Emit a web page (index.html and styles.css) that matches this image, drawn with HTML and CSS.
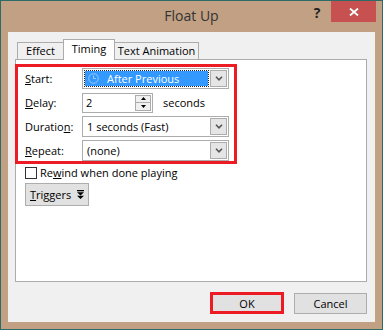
FILE: index.html
```html
<!DOCTYPE html>
<html lang="en">
<head>
    <meta charset="utf-8"/>
    <title>Float Up</title>
    <link rel="stylesheet" href="styles.css">
</head>
<body>
<div class="window">
    <div class="titlebar">
        <span class="title">Float Up</span>
        <div class="controls">
            <span class="help">?</span>
            <span class="close">
                <svg width="10" height="8" viewBox="0 0 10 8">
                    <path d="M1 0.5 L9 7.5 M9 0.5 L1 7.5" stroke="#fff" stroke-width="1.8" fill="none"/>
                </svg>
            </span>
        </div>
    </div>

    <div class="client">
        <div class="tabs">
            <span class="tab tab-effect">Effect</span>
            <span class="tab tab-timing active">Timing</span>
            <span class="tab tab-text">Text Animation</span>
        </div>

        <div class="tab-panel">
            <div class="highlight">
                <div class="row">
                    <span class="label"><u>S</u>tart:</span>
                    <div class="combo">
                        <div class="value selected">
                            <svg class="clock" width="11" height="11" viewBox="0 0 11 11">
                                <circle cx="5.5" cy="5.5" r="4.8" stroke="#9cc9ff" stroke-width="1" fill="none"/>
                                <path d="M5.5 2.5 V5.5 H8" stroke="#9cc9ff" stroke-width="1" fill="none"/>
                            </svg>
                            After Previous
                        </div>
                        <span class="drop">
                            <svg width="8" height="5" viewBox="0 0 8 5"><path d="M1 0.8 L4 3.8 L7 0.8" stroke="#555" stroke-width="1.6" fill="none"/></svg>
                        </span>
                    </div>
                </div>
                <div class="row">
                    <span class="label"><u>D</u>elay:</span>
                    <div class="spin-input">
                        <span class="spin-value">2</span>
                        <span class="spin">
                            <span class="spin-btn">
                                <svg width="5" height="3" viewBox="0 0 5 3"><path d="M0 3 L2.5 0 L5 3 Z" fill="#000"/></svg>
                            </span>
                            <span class="spin-btn">
                                <svg width="5" height="3" viewBox="0 0 5 3"><path d="M0 0 L5 0 L2.5 3 Z" fill="#000"/></svg>
                            </span>
                        </span>
                    </div>
                    <span class="unit">seconds</span>
                </div>
                <div class="row">
                    <span class="label">Duratio<u>n</u>:</span>
                    <div class="combo">
                        <div class="value">1 seconds (Fast)</div>
                        <span class="drop">
                            <svg width="8" height="5" viewBox="0 0 8 5"><path d="M1 0.8 L4 3.8 L7 0.8" stroke="#555" stroke-width="1.6" fill="none"/></svg>
                        </span>
                    </div>
                </div>
                <div class="row">
                    <span class="label"><u>R</u>epeat:</span>
                    <div class="combo">
                        <div class="value">(none)</div>
                        <span class="drop">
                            <svg width="8" height="5" viewBox="0 0 8 5"><path d="M1 0.8 L4 3.8 L7 0.8" stroke="#555" stroke-width="1.6" fill="none"/></svg>
                        </span>
                    </div>
                </div>
            </div>

            <div class="check">
                <span class="box"></span>
                <span>Re<u>w</u>ind when done playing</span>
            </div>

            <div class="triggers">
                <span><u>T</u>riggers</span>
                <svg width="7" height="9" viewBox="0 0 7 9">
                    <rect x="0" y="0" width="7" height="1.3" fill="#000"/>
                    <path d="M0 2.3 L7 2.3 L3.5 5.5 Z M0 5.8 L7 5.8 L3.5 9 Z" fill="#000"/>
                </svg>
            </div>
        </div>

        <div class="footer">
            <span class="btn ok">OK</span>
            <span class="btn">Cancel</span>
        </div>
    </div>
</div>
</body>
</html>
```

FILE: styles.css
```css
* {
    box-sizing: border-box;
}

body {
    margin: 0;
    font-family: "Open Sans", "Segoe UI", sans-serif;
    font-size: 11px;
    color: #000;
}

.window {
    width: 383px;
    height: 330px;
    border: 1px solid #2e6a68;
    background-color: #c1a083;
    display: flex;
    flex-direction: column;
}

/* title bar */
.titlebar {
    height: 31px;
    flex: none;
    display: grid;
    grid-template-columns: 1fr auto 1fr;
}

.title {
    grid-column: 2;
    font-size: 14px;
    line-height: 29px;
    color: #333;
}

.controls {
    grid-column: 3;
    justify-self: end;
    display: flex;
    align-items: flex-start;
    margin-right: 6px;
}

.help {
    width: 20px;
    margin-right: 4px;
    text-align: center;
    font-size: 14px;
    font-weight: bold;
    line-height: 24px;
    color: #222;
}

.close {
    width: 45px;
    height: 21px;
    background-color: #c75050;
    display: flex;
    align-items: center;
    justify-content: center;
}

/* dialog body */
.client {
    flex: 1;
    margin: 0 7px 7px;
    padding: 7px 8px 8px 7px;
    background-color: #f0f0f0;
    display: flex;
    flex-direction: column;
}

.tabs {
    height: 21px;
    margin-bottom: -1px;
    padding-left: 2px;
    display: flex;
    align-items: flex-end;
    position: relative;
    z-index: 1;
}

.tab {
    height: 17px;
    margin-bottom: 1px;
    margin-left: -1px;
    border: 1px solid #acacac;
    border-bottom: none;
    background-color: #f0f0f0;
    text-align: center;
    line-height: 15px;
}

.tab:first-child {
    margin-left: 0;
}

.tab-effect { width: 47px; }
.tab-timing { width: 52px; }
.tab-text { width: 85px; }

.tab.active {
    height: 21px;
    margin-bottom: 0;
    background-color: #fff;
    line-height: 18px;
}

.tab-panel {
    height: 223px;
    border: 1px solid #acacac;
    background-color: #fff;
}

/* red highlighted group */
.highlight {
    width: 222px;
    height: 100px;
    margin: 4px 0 0 -1px;
    padding: 1px 4px 0 7px;
    border: 3px solid #ed1c24;
    display: flex;
    flex-direction: column;
    gap: 3px;
}

.row {
    height: 21px;
    display: flex;
    align-items: center;
}

.label {
    width: 57px;
    flex: none;
}

.combo {
    width: 147px;
    height: 21px;
    padding: 1px;
    border: 1px solid #acacac;
    display: flex;
}

.value {
    flex: 1;
    padding-left: 3px;
    line-height: 17px;
    white-space: nowrap;
}

.value.selected {
    margin: 1px 2px 1px 1px;
    padding-left: 3px;
    background-color: #3399ff;
    color: #fff;
    outline: 1px dotted #222;
    display: flex;
    align-items: center;
    line-height: 15px;
}

.clock {
    margin-right: 8px;
}

.drop {
    width: 17px;
    border: 1px solid #acacac;
    background-color: #e5e5e5;
    display: flex;
    align-items: center;
    justify-content: center;
}

.spin-input {
    width: 71px;
    height: 20px;
    padding: 1px;
    border: 1px solid #acacac;
    display: flex;
}

.spin-value {
    flex: 1;
    padding-left: 2px;
    line-height: 16px;
}

.spin {
    width: 16px;
    display: flex;
    flex-direction: column;
    border: 1px solid #acacac;
}

.spin-btn {
    flex: 1;
    background-color: #f0f0f0;
    display: flex;
    align-items: center;
    justify-content: center;
}

.spin-btn + .spin-btn {
    border-top: 1px solid #acacac;
}

.unit {
    margin-left: 10px;
}

/* checkbox and triggers */
.check {
    height: 13px;
    margin: 2px 0 0 9px;
    display: flex;
    align-items: center;
    gap: 3px;
}

.box {
    width: 12px;
    height: 12px;
    border: 1px solid #333;
    background-color: #fff;
}

.triggers {
    width: 64px;
    height: 23px;
    margin: 4px 0 0 9px;
    padding-left: 4px;
    border: 1px solid #adadad;
    background-color: #e1e1e1;
    display: flex;
    align-items: center;
    gap: 6px;
}

/* footer buttons */
.footer {
    margin-top: auto;
    display: flex;
    justify-content: flex-end;
    align-items: flex-end;
    gap: 10px;
}

.btn {
    width: 73px;
    height: 21px;
    border: 1px solid #adadad;
    background-color: #e1e1e1;
    display: flex;
    align-items: center;
    justify-content: center;
}

.btn.ok {
    width: 74px;
    height: 22px;
    border: 3px solid #ed1c24;
}
```
